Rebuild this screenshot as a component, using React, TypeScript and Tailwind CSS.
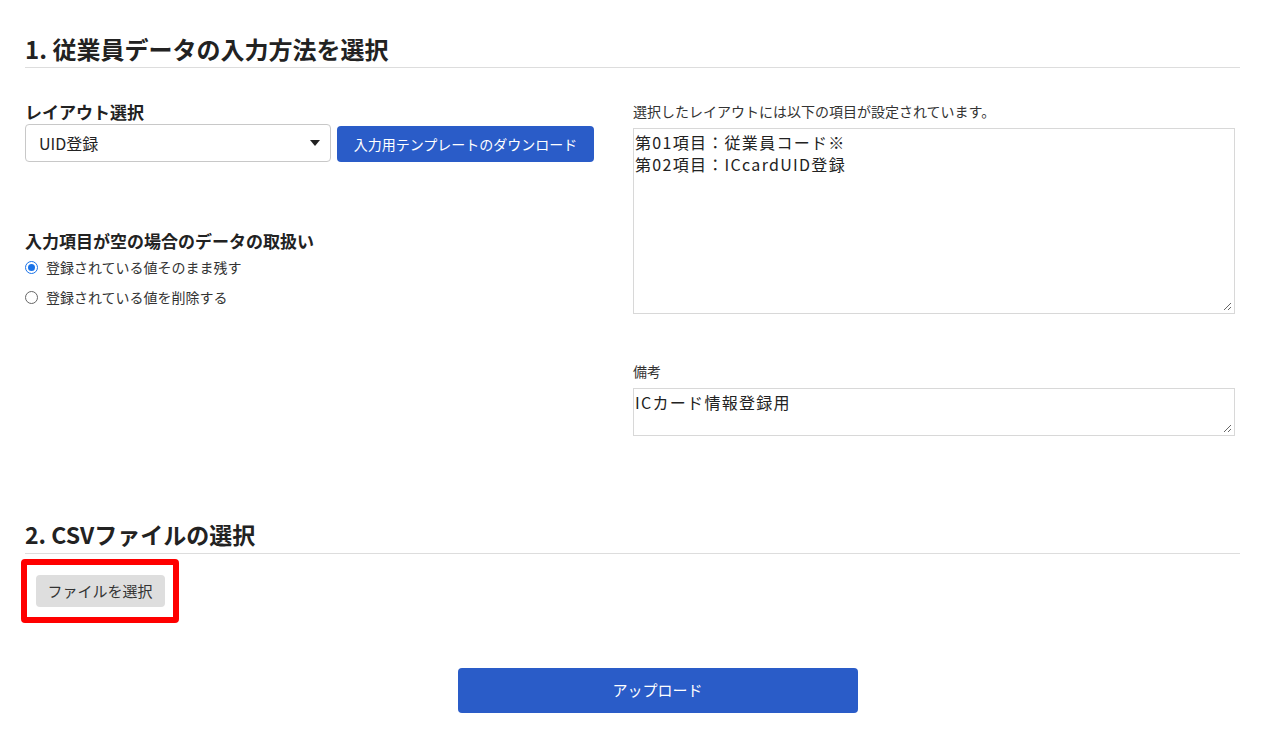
import React from "react";

const font = { fontFamily: '"Noto Sans CJK JP", "Noto Sans", sans-serif' };

export default function App() {
  return (
    <div className="w-[1285px] h-[730px] bg-white text-[#333]" style={font}>
      <div className="pl-[25px] pr-[45px] pt-[32px]">
        <h2 className="text-[24px] font-bold leading-[33px] text-[#222] border-b border-[#ddd] pb-[2px]">
          1. 従業員データの入力方法を選択
        </h2>
        <div className="flex mt-[30px]">
          <div className="w-[608px]">
            <div className="text-[17px] font-bold leading-[24px] text-[#222] mt-[2px]">レイアウト選択</div>
            <div className="flex items-start gap-[6px] mt-[0px]">
              <div className="relative w-[306px] h-[38px] border border-[#c8c8c8] rounded-[4px] bg-white flex items-center pl-[13px] text-[16px] text-[#222]">
                UID登録
                <svg className="absolute right-[10px] top-[15px]" width="10" height="6" viewBox="0 0 10 6">
                  <path d="M0 0 L10 0 L5 6 Z" fill="#222" />
                </svg>
              </div>
              <button className="mt-[2px] w-[257px] h-[36px] bg-[#2a5cc8] rounded-[4px] text-white text-[14px]">
                入力用テンプレートのダウンロード
              </button>
            </div>
            <div className="text-[17px] font-bold leading-[24px] text-[#222] mt-[67px]">入力項目が空の場合のデータの取扱い</div>
            <div className="flex items-center gap-[8px] mt-[4px] text-[14px] leading-[20px]">
              <span className="w-[13px] h-[13px] rounded-full border-[1.5px] border-[#1a73e8] flex items-center justify-center">
                <span className="w-[7px] h-[7px] rounded-full bg-[#1a73e8]" />
              </span>
              登録されている値そのまま残す
            </div>
            <div className="flex items-center gap-[8px] mt-[10px] text-[14px] leading-[20px]">
              <span className="w-[13px] h-[13px] rounded-full border border-[#666]" />
              登録されている値を削除する
            </div>
          </div>
          <div className="w-[602px] pt-[3px]">
            <div className="text-[14px] leading-[20px] text-[#333]">選択したレイアウトには以下の項目が設定されています。</div>
            <div className="relative mt-[7px] h-[186px] border border-[#d8d8d8] px-[1px] pt-[2px] text-[16px] leading-[22px] tracking-[1.3px] text-[#222]">
              <p>第01項目：従業員コード※</p>
              <p>第02項目：ICcardUID登録</p>
              <Grip />
            </div>
            <div className="text-[14px] leading-[20px] mt-[47px] text-[#333]">備考</div>
            <div className="relative mt-[7px] h-[48px] border border-[#d8d8d8] px-[1px] pt-[2px] text-[16px] leading-[22px] tracking-[1.3px] text-[#222]">
              ICカード情報登録用
              <Grip />
            </div>
          </div>
        </div>
        <h2 className="mt-[82px] text-[23px] font-bold leading-[33px] text-[#222] border-b border-[#ddd] pb-[2px]">
          2. CSVファイルの選択
        </h2>
        <div className="mt-[5px] ml-[-4px] w-[158px] h-[64px] border-[6px] border-[#f00] rounded-[4px] flex items-center justify-center">
          <button className="w-[129px] h-[32px] bg-[#dedede] rounded-[4px] text-[15px] text-[#333]">ファイルを選択</button>
        </div>
        <div className="flex justify-center mt-[45px] pl-[50px]">
          <button className="w-[400px] h-[45px] bg-[#2a5cc8] rounded-[4px] text-white text-[15px]">
            アップロード
          </button>
        </div>
      </div>
    </div>
  );
}

function Grip() {
  return (
    <svg className="absolute right-[2px] bottom-[2px]" width="9" height="9" viewBox="0 0 9 9">
      <path d="M8 1 L1 8 M8 5 L5 8" stroke="#666" strokeWidth="1" />
    </svg>
  );
}
